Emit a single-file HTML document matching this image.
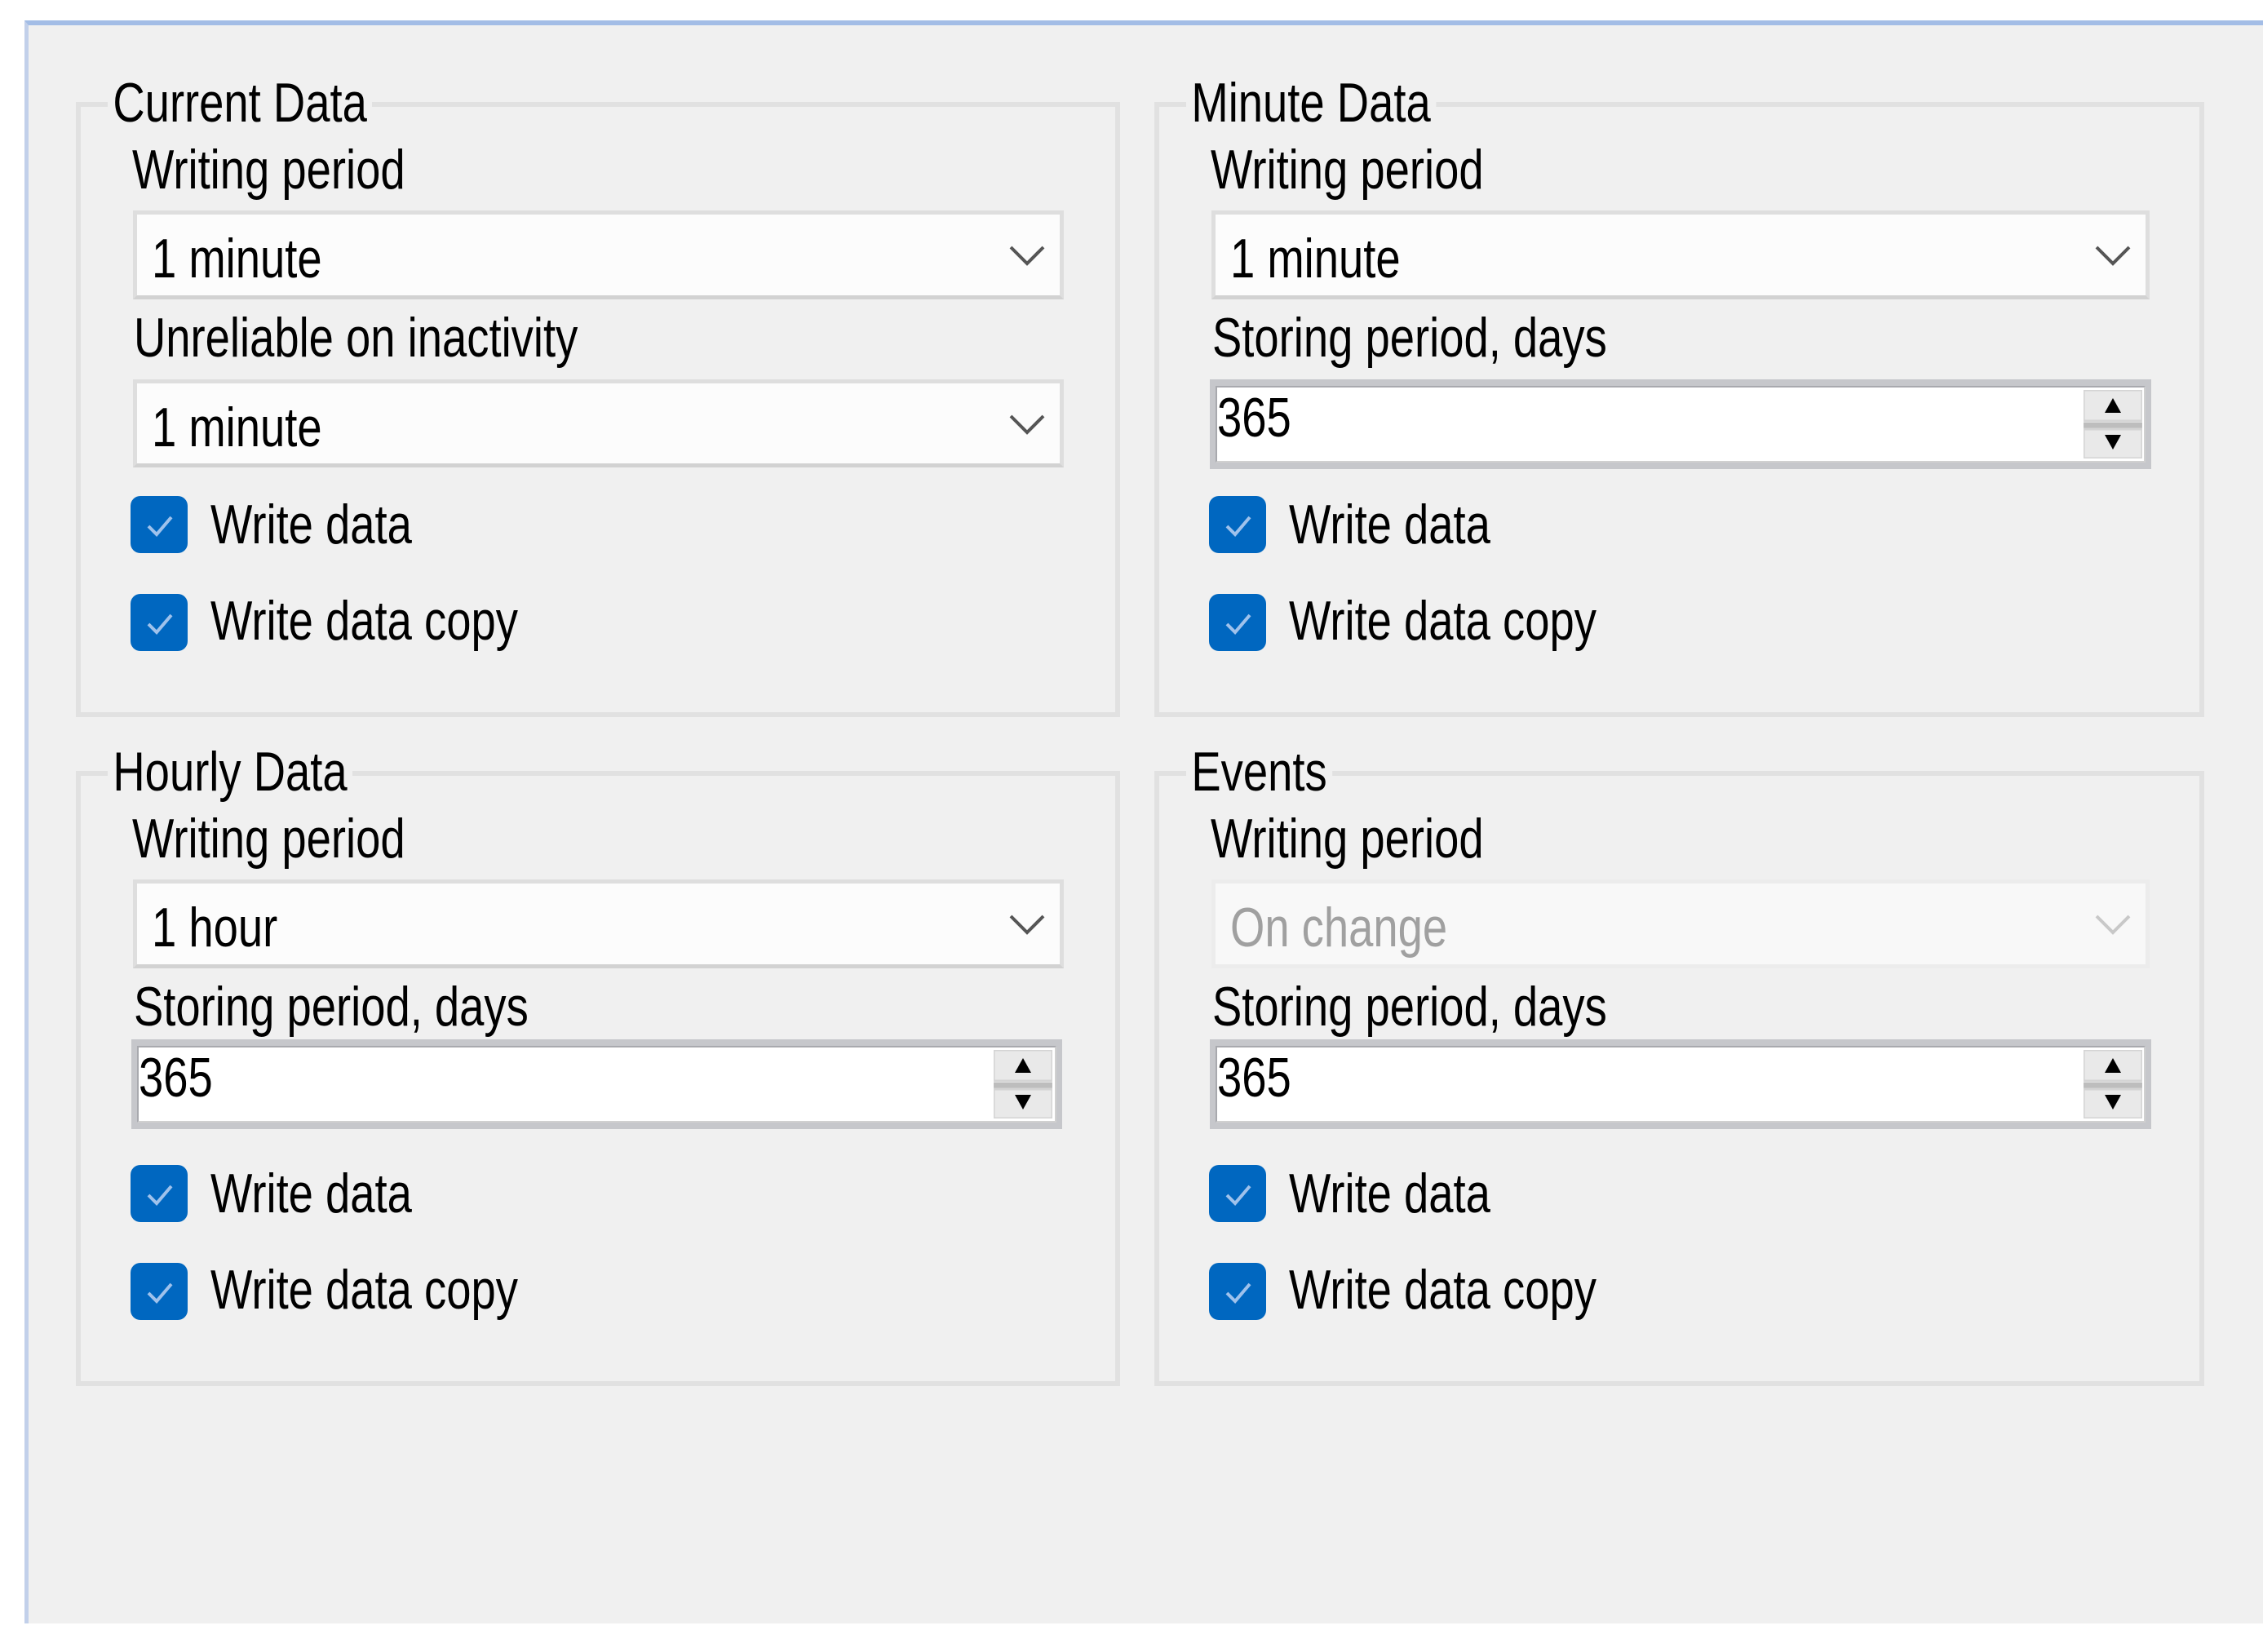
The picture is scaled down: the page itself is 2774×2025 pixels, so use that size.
<!DOCTYPE html>
<html><head><meta charset="utf-8"><style>
*{margin:0;padding:0;box-sizing:border-box}
html,body{width:2774px;height:2025px;overflow:hidden}
body{background:#fff;position:relative;font-family:"Liberation Sans",sans-serif;}
#panel{position:absolute;left:30px;top:25px;width:2744px;height:1965px;background:#f0f0f0;border-top:6px solid #a3bde6;border-left:5px solid #c2d0ea;}
.q{position:absolute;left:0;top:0;width:1400px;height:1000px}
.box{position:absolute;border:6px solid #e1e1e1;}
.t{position:absolute;font-size:68px;line-height:68px;white-space:nowrap;color:#000;transform:scaleX(.8);transform-origin:left top;}
.tb{background:#f0f0f0;padding:0 8px;margin-left:-8px}
.combo{position:absolute;background:#fcfcfc;border:5px solid #dedede;border-bottom-color:#d2d2d2;}
.combo.dis{background:#f8f8f8;border-color:#ececec;}
.spin{position:absolute;background:#fff;border:7px solid #c6c7cb;border-top-width:8px;border-bottom-width:8px;}
.spin .inner{position:absolute;left:0;top:0;right:0;bottom:0;border:2px solid #a8a9ae;border-right-color:#d0d0d0;border-bottom-color:#d0d0d0}
.cb{position:absolute;width:70px;height:70px;background:#0067c0;border-radius:12px;}
</style></head><body>
<div id="panel"></div>

<!-- Current Data -->
<div class="q" style="left:0;top:0">
  <div class="box" style="left:93px;top:125px;width:1280px;height:754px"></div>
  <div class="t tb" style="left:140px;top:92px">Current Data</div>
  <div class="t" style="left:162px;top:174px">Writing period</div>
  <div class="combo" style="left:163px;top:258px;width:1141px;height:109px"></div>
  <div class="t" style="left:186px;top:283px">1 minute</div>
  <svg style="position:absolute;left:1236px;top:298px" width="46" height="30"><polyline points="3,5 23,25 43,5" fill="none" stroke="#555" stroke-width="4"/></svg>
  <div class="t" style="left:164px;top:380px">Unreliable on inactivity</div>
  <div class="combo" style="left:163px;top:465px;width:1141px;height:108px"></div>
  <div class="t" style="left:186px;top:490px">1 minute</div>
  <svg style="position:absolute;left:1236px;top:505px" width="46" height="30"><polyline points="3,5 23,25 43,5" fill="none" stroke="#555" stroke-width="4"/></svg>
  <div class="cb" style="left:160px;top:608px"><svg width="70" height="70"><polyline points="22,37 32,47 50,26" fill="none" stroke="#9fc2ec" stroke-width="4"/></svg></div>
  <div class="t" style="left:258px;top:609px">Write data</div>
  <div class="cb" style="left:160px;top:728px"><svg width="70" height="70"><polyline points="22,37 32,47 50,26" fill="none" stroke="#9fc2ec" stroke-width="4"/></svg></div>
  <div class="t" style="left:258px;top:727px">Write data copy</div>
</div>

<!-- Minute Data -->
<div class="q" style="left:1322px;top:0">
  <div class="box" style="left:93px;top:125px;width:1287px;height:754px"></div>
  <div class="t tb" style="left:140px;top:92px">Minute Data</div>
  <div class="t" style="left:162px;top:174px">Writing period</div>
  <div class="combo" style="left:163px;top:258px;width:1150px;height:109px"></div>
  <div class="t" style="left:186px;top:283px">1 minute</div>
  <svg style="position:absolute;left:1245px;top:298px" width="46" height="30"><polyline points="3,5 23,25 43,5" fill="none" stroke="#555" stroke-width="4"/></svg>
  <div class="t" style="left:164px;top:380px">Storing period, days</div>
  <div class="spin" style="left:161px;top:465px;width:1154px;height:110px"><div class="inner"></div></div>
  <svg style="position:absolute;left:1232px;top:478px" width="72" height="84">
    <rect x="0" y="0" width="72" height="84" fill="#f0f0f0"/>
    <rect x="0" y="0" width="72" height="38" fill="#e9e9e9" stroke="#d4d4d4" stroke-width="3"/>
    <rect x="0" y="40" width="72" height="8" fill="#bdbdbd"/>
    <rect x="0" y="48" width="72" height="36" fill="#e9e9e9" stroke="#d4d4d4" stroke-width="3"/>
    <polygon points="36,10 46,28 26,28" fill="#000"/>
    <polygon points="26,55 46,55 36,73" fill="#000"/>
  </svg>
  <div class="t" style="left:170px;top:478px">365</div>
  <div class="cb" style="left:160px;top:608px"><svg width="70" height="70"><polyline points="22,37 32,47 50,26" fill="none" stroke="#9fc2ec" stroke-width="4"/></svg></div>
  <div class="t" style="left:258px;top:609px">Write data</div>
  <div class="cb" style="left:160px;top:728px"><svg width="70" height="70"><polyline points="22,37 32,47 50,26" fill="none" stroke="#9fc2ec" stroke-width="4"/></svg></div>
  <div class="t" style="left:258px;top:727px">Write data copy</div>
</div>

<!-- Hourly Data -->
<div class="q" style="left:0;top:820px">
  <div class="box" style="left:93px;top:125px;width:1280px;height:754px"></div>
  <div class="t tb" style="left:140px;top:92px">Hourly Data</div>
  <div class="t" style="left:162px;top:174px">Writing period</div>
  <div class="combo" style="left:163px;top:258px;width:1141px;height:109px"></div>
  <div class="t" style="left:186px;top:283px">1 hour</div>
  <svg style="position:absolute;left:1236px;top:298px" width="46" height="30"><polyline points="3,5 23,25 43,5" fill="none" stroke="#555" stroke-width="4"/></svg>
  <div class="t" style="left:164px;top:380px">Storing period, days</div>
  <div class="spin" style="left:161px;top:454px;width:1141px;height:110px"><div class="inner"></div></div>
  <svg style="position:absolute;left:1218px;top:467px" width="72" height="84">
    <rect x="0" y="0" width="72" height="84" fill="#f0f0f0"/>
    <rect x="0" y="0" width="72" height="38" fill="#e9e9e9" stroke="#d4d4d4" stroke-width="3"/>
    <rect x="0" y="40" width="72" height="8" fill="#bdbdbd"/>
    <rect x="0" y="48" width="72" height="36" fill="#e9e9e9" stroke="#d4d4d4" stroke-width="3"/>
    <polygon points="36,10 46,28 26,28" fill="#000"/>
    <polygon points="26,55 46,55 36,73" fill="#000"/>
  </svg>
  <div class="t" style="left:170px;top:467px">365</div>
  <div class="cb" style="left:160px;top:608px"><svg width="70" height="70"><polyline points="22,37 32,47 50,26" fill="none" stroke="#9fc2ec" stroke-width="4"/></svg></div>
  <div class="t" style="left:258px;top:609px">Write data</div>
  <div class="cb" style="left:160px;top:728px"><svg width="70" height="70"><polyline points="22,37 32,47 50,26" fill="none" stroke="#9fc2ec" stroke-width="4"/></svg></div>
  <div class="t" style="left:258px;top:727px">Write data copy</div>
</div>

<!-- Events -->
<div class="q" style="left:1322px;top:820px">
  <div class="box" style="left:93px;top:125px;width:1287px;height:754px"></div>
  <div class="t tb" style="left:140px;top:92px">Events</div>
  <div class="t" style="left:162px;top:174px">Writing period</div>
  <div class="combo dis" style="left:163px;top:258px;width:1150px;height:109px"></div>
  <div class="t" style="left:186px;top:283px;color:#a0a0a0">On change</div>
  <svg style="position:absolute;left:1245px;top:298px" width="46" height="30"><polyline points="3,5 23,25 43,5" fill="none" stroke="#c8c8c8" stroke-width="4"/></svg>
  <div class="t" style="left:164px;top:380px">Storing period, days</div>
  <div class="spin" style="left:161px;top:454px;width:1154px;height:110px"><div class="inner"></div></div>
  <svg style="position:absolute;left:1232px;top:467px" width="72" height="84">
    <rect x="0" y="0" width="72" height="84" fill="#f0f0f0"/>
    <rect x="0" y="0" width="72" height="38" fill="#e9e9e9" stroke="#d4d4d4" stroke-width="3"/>
    <rect x="0" y="40" width="72" height="8" fill="#bdbdbd"/>
    <rect x="0" y="48" width="72" height="36" fill="#e9e9e9" stroke="#d4d4d4" stroke-width="3"/>
    <polygon points="36,10 46,28 26,28" fill="#000"/>
    <polygon points="26,55 46,55 36,73" fill="#000"/>
  </svg>
  <div class="t" style="left:170px;top:467px">365</div>
  <div class="cb" style="left:160px;top:608px"><svg width="70" height="70"><polyline points="22,37 32,47 50,26" fill="none" stroke="#9fc2ec" stroke-width="4"/></svg></div>
  <div class="t" style="left:258px;top:609px">Write data</div>
  <div class="cb" style="left:160px;top:728px"><svg width="70" height="70"><polyline points="22,37 32,47 50,26" fill="none" stroke="#9fc2ec" stroke-width="4"/></svg></div>
  <div class="t" style="left:258px;top:727px">Write data copy</div>
</div>
</body></html>
